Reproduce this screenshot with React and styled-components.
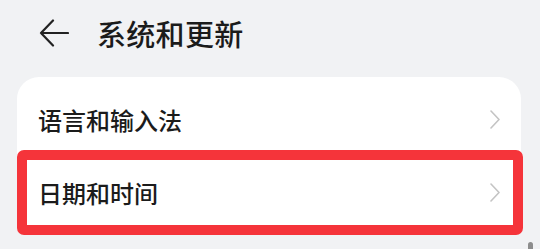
import React from "react";
import styled, { createGlobalStyle } from "styled-components";

const Global = createGlobalStyle`
  html, body { margin: 0; padding: 0; background: #f1f2f4; }
  body { font-family: "Noto Sans CJK SC", "Noto Sans", sans-serif; overflow: hidden; }
`;

const Page = styled.div`
  position: relative;
  width: 540px;
  height: 249px;
  background: #f1f2f4;
  overflow: hidden;
`;

const Header = styled.div`
  display: flex;
  align-items: center;
  height: 66px;
  padding-left: 39px;
  gap: 28px;
`;

const BackButton = styled.button`
  display: flex;
  align-items: center;
  justify-content: center;
  padding: 0;
  border: 0;
  background: transparent;
  width: 30px;
  height: 28px;
`;

const Title = styled.h1`
  margin: 0;
  font-size: 29px;
  font-weight: 500;
  color: #1b1b1b;
  line-height: 1;
  letter-spacing: 0.3px;
`;

const Card = styled.div`
  margin: 11px 0 0 17px;
  width: 504px;
  background: #ffffff;
  border-radius: 22px;
  padding: 6px 0 4px;
`;

const Row = styled.div`
  position: relative;
  display: flex;
  align-items: center;
  justify-content: space-between;
  height: 73px;
  padding: 0 21px 0 21px;
  box-sizing: border-box;
`;

const Label = styled.span`
  font-size: 24px;
  font-weight: 500;
  color: #1b1b1b;
  line-height: 1;
`;

const Highlight = styled.div`
  position: absolute;
  top: -6px;
  bottom: -6px;
  left: 0;
  right: -2px;
  border: 10px solid #f5343a;
  border-radius: 7px;
  pointer-events: none;
`;

const ScrollThumb = styled.div`
  position: absolute;
  left: 528px;
  top: 242px;
  width: 5px;
  height: 20px;
  border-radius: 3px;
  background: #8d8d8d;
`;

const Chevron = () => (
  <svg width="10" height="19" viewBox="0 0 10 19" fill="none">
    <path d="M1 1 L9 9.5 L1 18" stroke="#c4c4c4" strokeWidth="1.6" strokeLinecap="round" strokeLinejoin="round" />
  </svg>
);

const BackArrow = () => (
  <svg width="30" height="28" viewBox="0 0 30 28" fill="none">
    <path d="M29 14 H2 M14 1.5 L2 14 L14 26.5" stroke="#222" strokeWidth="2.2" strokeLinecap="round" strokeLinejoin="round" />
  </svg>
);

const items = [
  { label: "语言和输入法" },
  { label: "日期和时间", highlighted: true },
];

export default function App() {
  return (
    <>
      <Global />
      <Page>
        <Header>
          <BackButton aria-label="返回">
            <BackArrow />
          </BackButton>
          <Title>系统和更新</Title>
        </Header>
        <Card>
          {items.map((it) => (
            <Row key={it.label}>
              <Label>{it.label}</Label>
              <Chevron />
              {it.highlighted && <Highlight />}
            </Row>
          ))}
        </Card>
        <ScrollThumb />
      </Page>
    </>
  );
}
